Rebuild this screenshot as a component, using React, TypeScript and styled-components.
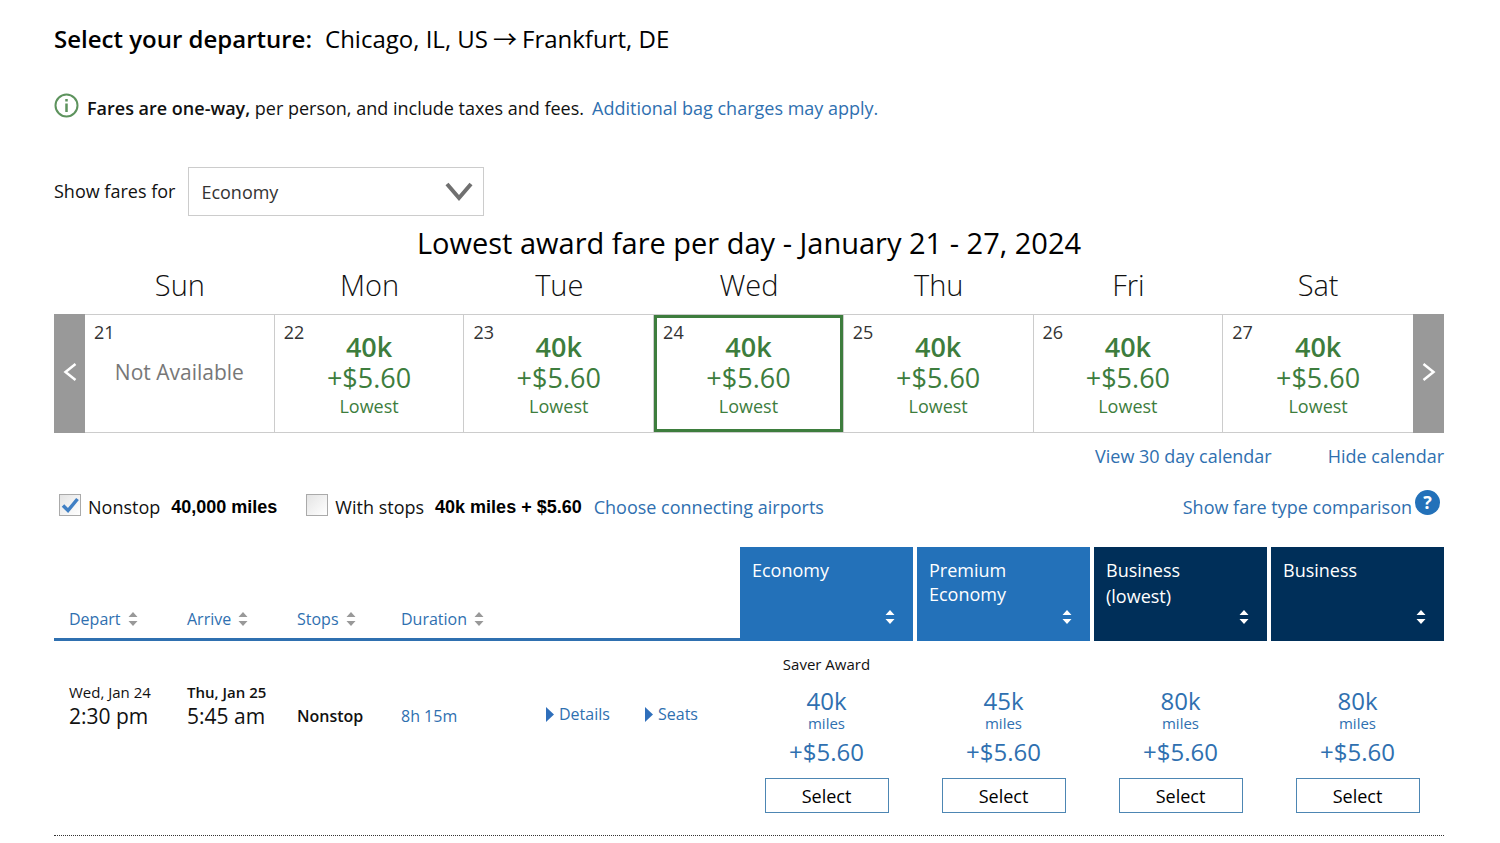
import React from "react";
import styled, { createGlobalStyle } from "styled-components";

const blue = "#2f70b0";
const green = "#3d7d3d";

const GlobalStyle = createGlobalStyle`
  *, *::before, *::after { box-sizing: border-box; }
  body {
    margin: 0;
    background: #fff;
    color: #111;
    font-family: "Open Sans", "Liberation Sans", sans-serif;
    font-size: 18px;
    line-height: 24px;
  }
  button, select { font-family: inherit; }
  table { border-collapse: separate; border-spacing: 0; table-layout: fixed; width: 100%; }
  th, td { padding: 0; font-weight: 400; text-align: left; }
`;

const Page = styled.main`
  padding: 23px 56px 8px 54px;
`;

const Link = styled.a`
  color: ${blue};
  text-decoration: none;
`;

const Heading = styled.h1`
  display: flex;
  gap: 13px;
  margin: 0;
  font-size: 24px;
  line-height: 32px;
  font-weight: 400;
  color: #000;
  strong { font-weight: 600; }
`;

const Arrow = styled.span`
  margin: 0 5px;
  font-family: "Noto Sans CJK JP", sans-serif;
  line-height: 0;
`;

const Notice = styled.p`
  display: flex;
  align-items: center;
  margin: 38px 0 0;
  line-height: 28px;
  svg { margin: 0 8px 4px 0; }
  strong { font-weight: 600; }
  a { margin-left: 8px; }
`;

const FareFilter = styled.div`
  display: flex;
  align-items: center;
  gap: 13px;
  margin-top: 45px;
  label { padding-bottom: 2px; }
`;

const SelectWrap = styled.div`
  display: grid;
  align-items: center;
  width: 296px;
  > * { grid-area: 1 / 1; }
  svg { justify-self: end; margin-right: 11px; pointer-events: none; }
`;

const CabinSelect = styled.select`
  width: 100%;
  height: 49px;
  padding: 0 12px;
  border: 1px solid #ccc;
  border-radius: 0;
  background: #fff;
  color: #333;
  font-size: 18px;
  appearance: none;
`;

const Calendar = styled.table`
  margin-top: 6px;
  caption { font-size: 29px; line-height: 42px; padding-bottom: 2px; color: #000; }
  th { text-align: center; font-size: 29px; line-height: 38px; font-weight: 300; padding-bottom: 10px; }
`;

const NavCol = styled.col`
  width: 31px;
`;

const NavButton = styled.button`
  display: flex;
  align-items: center;
  justify-content: center;
  width: 100%;
  height: 119px;
  padding: 0 0 4px;
  border: 0;
  background: #999;
`;

const DayCell = styled.td`
  border: solid #ccc;
  border-width: 1px 1px 1px 0;
  &:nth-last-child(2) { border-right: 0; }
`;

const DayButton = styled.button<{ $selected?: boolean }>`
  position: relative;
  display: flex;
  flex-direction: column;
  align-items: center;
  justify-content: center;
  width: 100%;
  height: 117px;
  padding: 2px 0 0;
  border: 3px solid ${(p) => (p.$selected ? green : "transparent")};
  background: transparent;
  color: ${green};
  font-size: 18px;
  line-height: 24px;
  &:disabled { padding: 0 0 4px; }
`;

const DayNumber = styled.span`
  position: absolute;
  top: 2px;
  left: 6px;
  color: #333;
  font-size: 18px;
`;

const Miles = styled.strong`
  font-size: 27px;
  line-height: 30px;
  font-weight: 600;
`;

const Fee = styled.span`
  font-size: 27px;
  line-height: 32px;
`;

const Unavailable = styled.span`
  color: #777;
  font-size: 21px;
`;

const CalendarLinks = styled.div`
  display: flex;
  justify-content: flex-end;
  gap: 56px;
  margin-top: 11px;
`;

const StopsBar = styled.div`
  display: flex;
  align-items: center;
  margin-top: 22px;
  padding: 0 4px 0 5px;
  line-height: 28px;
`;

const StopOption = styled.label`
  display: flex;
  align-items: center;
  gap: 7px;
  margin-right: 29px;
  strong { margin-left: 4px; font: 700 18px/28px "Liberation Sans", Arial, sans-serif; color: #000; }
  &:nth-of-type(2) { margin-right: 12px; }
`;

const CheckBox = styled.span`
  display: grid;
  width: 22px;
  height: 22px;
  margin-bottom: 4px;
  > * { grid-area: 1 / 1; }
  input {
    width: 22px;
    height: 22px;
    margin: 0;
    appearance: none;
    border: 1px solid #aaa;
    background: linear-gradient(135deg, #e4e4e4, #fff);
  }
  svg { display: none; pointer-events: none; }
  input:checked + svg { display: block; }
`;

const Comparison = styled.div`
  display: flex;
  align-items: center;
  gap: 3px;
  margin-left: auto;
`;

const HelpButton = styled.button`
  display: block;
  width: 25px;
  height: 25px;
  margin-bottom: 8px;
  padding: 0;
  border: 0;
  border-radius: 50%;
  background: #2371b9;
  color: #fff;
  font-size: 18px;
  line-height: 25px;
  font-weight: 700;
`;

const Flights = styled.table`
  margin-top: 24px;
  border-bottom: 1px dotted #333;
`;

const Col = styled.col<{ $w?: number }>`
  width: ${(p) => (p.$w ? `${p.$w}px` : "auto")};
`;

const SortHead = styled.th`
  padding: 0 0 7px 15px;
  vertical-align: bottom;
  border-bottom: 3px solid ${blue};
`;

const SortButton = styled.button`
  display: flex;
  align-items: center;
  gap: 7px;
  padding: 0;
  border: 0;
  background: none;
  color: ${blue};
  font-size: 16px;
  line-height: 24px;
`;

const CabinHead = styled.th<{ $first?: boolean }>`
  padding-left: ${(p) => (p.$first ? 0 : 4)}px;
`;

const CabinButton = styled.button<{ $dark?: boolean }>`
  display: flex;
  justify-content: space-between;
  width: 100%;
  height: 94px;
  padding: 11px 18px 17px 12px;
  border: 0;
  background: ${(p) => (p.$dark ? "#002f59" : "#2371b9")};
  color: #fff;
  font-size: 18px;
  line-height: 24px;
  text-align: left;
  svg { align-self: flex-end; flex: none; }
`;

const CabinName = styled.span`
  display: block;
`;

const CabinQualifier = styled.span`
  display: block;
  line-height: 28px;
`;

const FlightCell = styled.td`
  padding: 39px 0 0 15px;
  vertical-align: top;
`;

const DateLine = styled.div<{ $bold?: boolean }>`
  font-size: 15px;
  line-height: 24px;
  font-weight: ${(p) => (p.$bold ? 600 : 400)};
`;

const TimeLine = styled.div`
  font-size: 21px;
  line-height: 24px;
`;

const Fact = styled.div`
  padding-top: 24px;
  font-size: 16px;
  strong { font-weight: 600; }
`;

const Expand = styled(Link)`
  display: flex;
  align-items: center;
  gap: 5px;
  margin-top: 22px;
  font-size: 16px;
`;

const FareCell = styled.td<{ $first?: boolean }>`
  height: 194px;
  padding: 11px 0 0 ${(p) => (p.$first ? 0 : 4)}px;
  vertical-align: top;
`;

const Fare = styled.div`
  display: flex;
  flex-direction: column;
  align-items: center;
  color: ${blue};
`;

const FareNote = styled.span`
  height: 24px;
  color: #111;
  font-size: 15px;
`;

const FareMiles = styled.span`
  margin-top: 11px;
  font-size: 24px;
  line-height: 28px;
`;

const FareUnit = styled.span`
  font-size: 15px;
  line-height: 16px;
`;

const FareFee = styled.span`
  margin-top: 6px;
  font-size: 24px;
  line-height: 30px;
`;

const SelectButton = styled.button`
  width: 124px;
  height: 35px;
  margin-top: 11px;
  padding: 0;
  border: 1px solid #4d86b3;
  background: #fff;
  color: #000;
  font-size: 18px;
  line-height: 24px;
`;

function SortIcon({ color }: { color: string }) {
  return (
    <svg width="10" height="14" viewBox="0 0 10 14" fill={color} aria-hidden="true">
      <path d="M5 0 9.5 5H.5zM5 14 .5 9h9z" />
    </svg>
  );
}

function Chevron({ left }: { left?: boolean }) {
  return (
    <svg width="14" height="20" viewBox="0 0 14 20" fill="none" stroke="#fff" strokeWidth="2.5" aria-hidden="true">
      <path d={left ? "M12.5 2 2.5 10l10 8" : "M1.5 2l10 8-10 8"} />
    </svg>
  );
}

const days = [
  { name: "Sun", date: 21 },
  { name: "Mon", date: 22, miles: "40k" },
  { name: "Tue", date: 23, miles: "40k" },
  { name: "Wed", date: 24, miles: "40k", selected: true },
  { name: "Thu", date: 25, miles: "40k" },
  { name: "Fri", date: 26, miles: "40k" },
  { name: "Sat", date: 27, miles: "40k" },
];

const cabins = [
  { title: ["Economy"], miles: "40k", note: "Saver Award" },
  { title: ["Premium", "Economy"], miles: "45k" },
  { title: ["Business"], qualifier: "(lowest)", miles: "80k", dark: true },
  { title: ["Business"], miles: "80k", dark: true },
];

export default function App() {
  return (
    <Page>
      <GlobalStyle />
      <Heading>
        <strong>Select your departure:</strong>
        <span>
          Chicago, IL, US<Arrow>→</Arrow>Frankfurt, DE
        </span>
      </Heading>

      <Notice>
        <svg width="25" height="25" viewBox="0 0 25 25" fill="none" stroke="#5d935d" strokeWidth="2" aria-hidden="true">
          <circle cx="12.5" cy="12.5" r="11" />
          <path d="M12.5 10.5v8.5M12.5 6v2.5" strokeWidth="2.5" />
        </svg>
        <span>
          <strong>Fares are one-way,</strong> per person, and include taxes and fees.
        </span>
        <Link href="#bags">Additional bag charges may apply.</Link>
      </Notice>

      <FareFilter>
        <label htmlFor="cabin">Show fares for</label>
        <SelectWrap>
          <CabinSelect id="cabin" defaultValue="Economy">
            <option>Economy</option>
            <option>Premium Economy</option>
            <option>Business</option>
          </CabinSelect>
          <svg width="28" height="20" viewBox="0 0 28 20" fill="none" stroke="#707070" strokeWidth="4" aria-hidden="true">
            <path d="M2 2l12 14L26 2" />
          </svg>
        </SelectWrap>
      </FareFilter>

      <Calendar>
        <caption>Lowest award fare per day - January 21 - 27, 2024</caption>
        <colgroup>
          <NavCol />
          {days.map((d) => (
            <col key={d.name} />
          ))}
          <NavCol />
        </colgroup>
        <thead>
          <tr>
            <td />
            {days.map((d) => (
              <th key={d.name} scope="col">{d.name}</th>
            ))}
            <td />
          </tr>
        </thead>
        <tbody>
          <tr>
            <td>
              <NavButton aria-label="Previous week"><Chevron left /></NavButton>
            </td>
            {days.map((d) => (
              <DayCell key={d.name}>
                <DayButton $selected={d.selected} disabled={!d.miles}>
                  <DayNumber>{d.date}</DayNumber>
                  {d.miles ? (
                    <>
                      <Miles>{d.miles}</Miles>
                      <Fee>+$5.60</Fee>
                      <span>Lowest</span>
                    </>
                  ) : (
                    <Unavailable>Not Available</Unavailable>
                  )}
                </DayButton>
              </DayCell>
            ))}
            <td>
              <NavButton aria-label="Next week"><Chevron /></NavButton>
            </td>
          </tr>
        </tbody>
      </Calendar>

      <CalendarLinks>
        <Link href="#month">View 30 day calendar</Link>
        <Link href="#hide">Hide calendar</Link>
      </CalendarLinks>

      <StopsBar>
        {[
          { label: "Nonstop", price: "40,000 miles", on: true },
          { label: "With stops", price: "40k miles + $5.60", on: false },
        ].map((o) => (
          <StopOption key={o.label}>
            <CheckBox>
              <input type="checkbox" defaultChecked={o.on} />
              <svg width="22" height="22" viewBox="0 0 22 22" fill="none" stroke="#3f7fc4" strokeWidth="3.5" aria-hidden="true">
                <path d="M4 11.5l5 5L18.5 5" />
              </svg>
            </CheckBox>
            {o.label}
            <strong>{o.price}</strong>
          </StopOption>
        ))}
        <Link href="#airports">Choose connecting airports</Link>
        <Comparison>
          <Link href="#compare">Show fare type comparison</Link>
          <HelpButton>?</HelpButton>
        </Comparison>
      </StopsBar>

      <Flights>
        <colgroup>
          <Col $w={118} />
          <Col $w={110} />
          <Col $w={104} />
          <Col $w={145} />
          <Col $w={99} />
          <Col />
          <Col $w={173} />
          <Col $w={177} />
          <Col $w={177} />
          <Col $w={177} />
        </colgroup>
        <thead>
          <tr>
            {["Depart", "Arrive", "Stops", "Duration"].map((name) => (
              <SortHead key={name} scope="col">
                <SortButton>
                  {name}
                  <SortIcon color="#999" />
                </SortButton>
              </SortHead>
            ))}
            <SortHead as="td" colSpan={2} />
            {cabins.map((c, i) => (
              <CabinHead key={i} scope="col" $first={i === 0}>
                <CabinButton $dark={c.dark}>
                  <span>
                    {c.title.map((line) => (
                      <CabinName key={line}>{line}</CabinName>
                    ))}
                    {c.qualifier && <CabinQualifier>{c.qualifier}</CabinQualifier>}
                  </span>
                  <SortIcon color="#fff" />
                </CabinButton>
              </CabinHead>
            ))}
          </tr>
        </thead>
        <tbody>
          <tr>
            <FlightCell>
              <DateLine>Wed, Jan 24</DateLine>
              <TimeLine>2:30 pm</TimeLine>
            </FlightCell>
            <FlightCell>
              <DateLine $bold>Thu, Jan 25</DateLine>
              <TimeLine>5:45 am</TimeLine>
            </FlightCell>
            <FlightCell>
              <Fact><strong>Nonstop</strong></Fact>
            </FlightCell>
            <FlightCell>
              <Fact><Link href="#duration">8h 15m</Link></Fact>
            </FlightCell>
            {["Details", "Seats"].map((name) => (
              <FlightCell key={name}>
                <Expand href={`#${name.toLowerCase()}`}>
                  <svg width="8" height="15" viewBox="0 0 8 15" fill="#2f6fbb" aria-hidden="true">
                    <path d="M0 0l8 7.5L0 15z" />
                  </svg>
                  {name}
                </Expand>
              </FlightCell>
            ))}
            {cabins.map((c, i) => (
              <FareCell key={i} $first={i === 0}>
                <Fare>
                  <FareNote>{c.note}</FareNote>
                  <FareMiles>{c.miles}</FareMiles>
                  <FareUnit>miles</FareUnit>
                  <FareFee>+$5.60</FareFee>
                  <SelectButton>Select</SelectButton>
                </Fare>
              </FareCell>
            ))}
          </tr>
        </tbody>
      </Flights>
    </Page>
  );
}
